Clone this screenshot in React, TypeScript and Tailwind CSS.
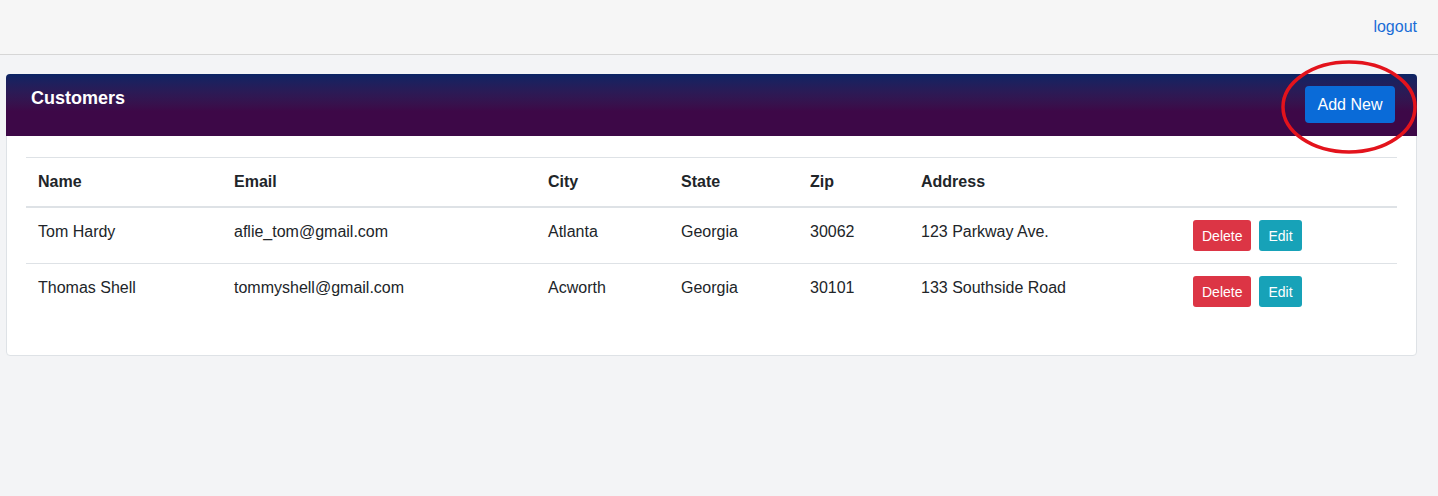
import React from "react";

interface Customer {
  id: number;
  name: string;
  email: string;
  city: string;
  state: string;
  zip: string;
  address: string;
}

const customers: Customer[] = [
  { id: 1, name: "Tom Hardy", email: "aflie_tom@gmail.com", city: "Atlanta", state: "Georgia", zip: "30062", address: "123 Parkway Ave." },
  { id: 2, name: "Thomas Shell", email: "tommyshell@gmail.com", city: "Acworth", state: "Georgia", zip: "30101", address: "133 Southside Road" },
];

const App = () => {
  return (
    <div className="min-h-screen bg-[#f3f4f6] text-[#212529] font-['Liberation_Sans',Arial,sans-serif]">
      <div className="h-[55px] bg-[#f6f6f6] border-b border-[#d6d6d6] flex items-center justify-end pr-[21px]">
        <a href="#" className="text-[16px] leading-6 text-[#1a6dd6]">logout</a>
      </div>

      <div className="pl-[6px] pt-[19px]">
        <div className="w-[1411px] bg-white border border-[#dee2e6] rounded-[4px]">
          <div className="relative h-[62px] -mt-px -mx-px rounded-t-[4px] bg-gradient-to-b from-[#0a2464] to-[#3d0847] to-60% flex items-start justify-between pl-[25px] pr-[22px] pt-[12px]">
            <h2 className="text-white text-[18px] font-bold leading-6">Customers</h2>
            <button className="h-[37px] w-[90px] rounded-[4px] bg-[#0a6bd8] text-white text-[16px] leading-6">Add New</button>
            <svg className="absolute right-[-2px] top-[-14px] pointer-events-none" width="140" height="96" viewBox="0 0 140 96">
              <ellipse cx="70" cy="47" rx="66" ry="45" fill="none" stroke="#e3131c" strokeWidth="3.5" />
            </svg>
          </div>

          <div className="px-[19px] pt-[21px] pb-9">
            <table className="w-full border-collapse text-[16px] leading-6">
              <thead>
                <tr className="border-t border-[#dee2e6] border-b-2">
                  <th className="w-[196px] text-left font-bold px-3 py-3">Name</th>
                  <th className="w-[314px] text-left font-bold px-3 py-3">Email</th>
                  <th className="w-[133px] text-left font-bold px-3 py-3">City</th>
                  <th className="w-[129px] text-left font-bold px-3 py-3">State</th>
                  <th className="w-[111px] text-left font-bold px-3 py-3">Zip</th>
                  <th className="w-[272px] text-left font-bold px-3 py-3">Address</th>
                  <th className="px-3 py-3"></th>
                </tr>
              </thead>
              <tbody>
                {customers.map((c, i) => (
                  <tr key={c.id} className={i > 0 ? "border-t border-[#dee2e6]" : ""}>
                    <td className="px-3 py-3 align-top">{c.name}</td>
                    <td className="px-3 py-3 align-top">{c.email}</td>
                    <td className="px-3 py-3 align-top">{c.city}</td>
                    <td className="px-3 py-3 align-top">{c.state}</td>
                    <td className="px-3 py-3 align-top">{c.zip}</td>
                    <td className="px-3 py-3 align-top">{c.address}</td>
                    <td className="px-3 py-3 align-top">
                      <div className="flex gap-2">
                        <button className="h-[31px] px-[9px] rounded-[3px] bg-[#dc3545] text-white text-[14px]">Delete</button>
                        <button className="h-[31px] px-[9px] rounded-[3px] bg-[#17a2b8] text-white text-[14px]">Edit</button>
                      </div>
                    </td>
                  </tr>
                ))}
              </tbody>
            </table>
          </div>
        </div>
      </div>
    </div>
  );
};

export default App;
